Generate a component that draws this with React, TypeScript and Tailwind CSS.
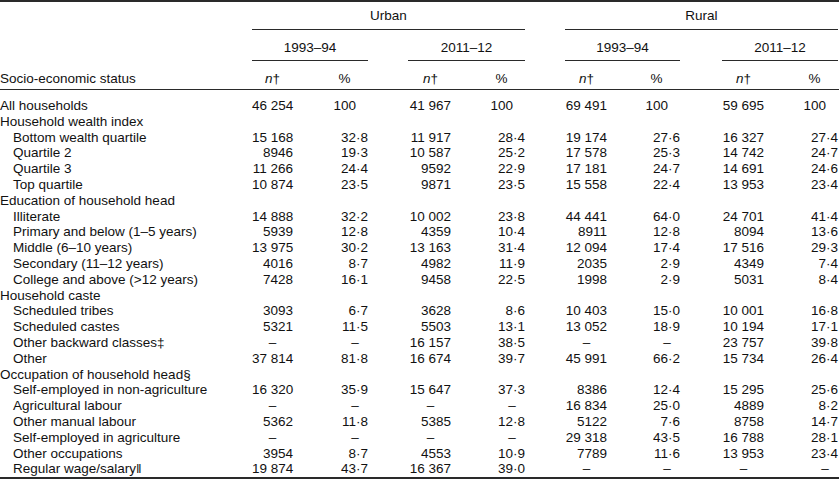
const GRID = 'grid grid-cols-[252px_41px_75px_83px_74px_82px_73px_84px_74px]';

type Row = { label: string; sub?: boolean; v?: string[] };

const rows: Row[] = [
  { label: 'All households', v: ['46 254', '100', '41 967', '100', '69 491', '100', '59 695', '100'] },
  { label: 'Household wealth index' },
  { label: 'Bottom wealth quartile', sub: true, v: ['15 168', '32·8', '11 917', '28·4', '19 174', '27·6', '16 327', '27·4'] },
  { label: 'Quartile 2', sub: true, v: ['8946', '19·3', '10 587', '25·2', '17 578', '25·3', '14 742', '24·7'] },
  { label: 'Quartile 3', sub: true, v: ['11 266', '24·4', '9592', '22·9', '17 181', '24·7', '14 691', '24·6'] },
  { label: 'Top quartile', sub: true, v: ['10 874', '23·5', '9871', '23·5', '15 558', '22·4', '13 953', '23·4'] },
  { label: 'Education of household head' },
  { label: 'Illiterate', sub: true, v: ['14 888', '32·2', '10 002', '23·8', '44 441', '64·0', '24 701', '41·4'] },
  { label: 'Primary and below (1–5 years)', sub: true, v: ['5939', '12·8', '4359', '10·4', '8911', '12·8', '8094', '13·6'] },
  { label: 'Middle (6–10 years)', sub: true, v: ['13 975', '30·2', '13 163', '31·4', '12 094', '17·4', '17 516', '29·3'] },
  { label: 'Secondary (11–12 years)', sub: true, v: ['4016', '8·7', '4982', '11·9', '2035', '2·9', '4349', '7·4'] },
  { label: 'College and above (>12 years)', sub: true, v: ['7428', '16·1', '9458', '22·5', '1998', '2·9', '5031', '8·4'] },
  { label: 'Household caste' },
  { label: 'Scheduled tribes', sub: true, v: ['3093', '6·7', '3628', '8·6', '10 403', '15·0', '10 001', '16·8'] },
  { label: 'Scheduled castes', sub: true, v: ['5321', '11·5', '5503', '13·1', '13 052', '18·9', '10 194', '17·1'] },
  { label: 'Other backward classes‡', sub: true, v: ['–', '–', '16 157', '38·5', '–', '–', '23 757', '39·8'] },
  { label: 'Other', sub: true, v: ['37 814', '81·8', '16 674', '39·7', '45 991', '66·2', '15 734', '26·4'] },
  { label: 'Occupation of household head§' },
  { label: 'Self-employed in non-agriculture', sub: true, v: ['16 320', '35·9', '15 647', '37·3', '8386', '12·4', '15 295', '25·6'] },
  { label: 'Agricultural labour', sub: true, v: ['–', '–', '–', '–', '16 834', '25·0', '4889', '8·2'] },
  { label: 'Other manual labour', sub: true, v: ['5362', '11·8', '5385', '12·8', '5122', '7·6', '8758', '14·7'] },
  { label: 'Self-employed in agriculture', sub: true, v: ['–', '–', '–', '–', '29 318', '43·5', '16 788', '28·1'] },
  { label: 'Other occupations', sub: true, v: ['3954', '8·7', '4553', '10·9', '7789', '11·6', '13 953', '23·4'] },
  { label: 'Regular wage/salary‖', sub: true, v: ['19 874', '43·7', '16 367', '39·0', '–', '–', '–', '–'] },
];

function NCell({ v }: { v: string }) {
  if (v === '–') {
    return (
      <div className="text-right">
        <span className="inline-block w-[41px] text-center">–</span>
      </div>
    );
  }
  return <div className="text-right">{v}</div>;
}

function PCell({ v }: { v: string }) {
  if (v === '–') {
    return (
      <div className="text-right">
        <span className="inline-block w-[26px] text-center">–</span>
      </div>
    );
  }
  if (v === '100') {
    return (
      <div className="text-right">
        100<span className="invisible">·0</span>
      </div>
    );
  }
  return <div className="text-right">{v}</div>;
}

function SubHead() {
  return (
    <>
      <div className="text-right">
        <span className="inline-block w-[41px] text-center">
          <i>n</i>†
        </span>
      </div>
      <div className="text-right">
        <span className="inline-block w-[23px] text-center">%</span>
        <span className="invisible">·0</span>
      </div>
    </>
  );
}

export default function App() {
  return (
    <div className="w-[839px] h-[482px] overflow-hidden bg-white text-[#111] font-['Liberation_Sans',Arial,sans-serif] text-[13.5px] leading-[15.8px] whitespace-nowrap">
      <div className="border-t-2 border-b-2 border-[#2a2a2a]">
        {/* Urban / Rural */}
        <div className={`${GRID} h-[28px]`}>
          <div />
          <div className="col-span-4 border-b border-[#2a2a2a] pt-[6px] text-center">Urban</div>
          <div className="col-span-4 ml-[40px] border-b border-[#2a2a2a] pt-[6px] text-center">Rural</div>
        </div>

        {/* survey years */}
        <div className={`${GRID} h-[31px]`}>
          <div />
          <div className="col-span-2 border-b border-[#2a2a2a] pt-[10px] text-center">1993–94</div>
          <div className="col-span-2 ml-[40px] border-b border-[#2a2a2a] pt-[10px] text-center">2011–12</div>
          <div className="col-span-2 ml-[40px] border-b border-[#2a2a2a] pt-[10px] text-center">1993–94</div>
          <div className="col-span-2 ml-[42px] border-b border-[#2a2a2a] pt-[10px] text-center">2011–12</div>
        </div>

        {/* column labels */}
        <div className={`${GRID} h-[29px] pt-[10px] border-b border-[#2a2a2a]`}>
          <div>Socio-economic status</div>
          <SubHead />
          <SubHead />
          <SubHead />
          <SubHead />
        </div>

        <div className="pt-[8px]">
          {rows.map((r) => (
            <div key={r.label} className={GRID}>
              <div className={r.sub ? 'pl-[13px]' : ''}>{r.label}</div>
              {r.v &&
                r.v.map((x, i) =>
                  i % 2 === 0 ? <NCell key={i} v={x} /> : <PCell key={i} v={x} />
                )}
            </div>
          ))}
        </div>
      </div>
    </div>
  );
}
